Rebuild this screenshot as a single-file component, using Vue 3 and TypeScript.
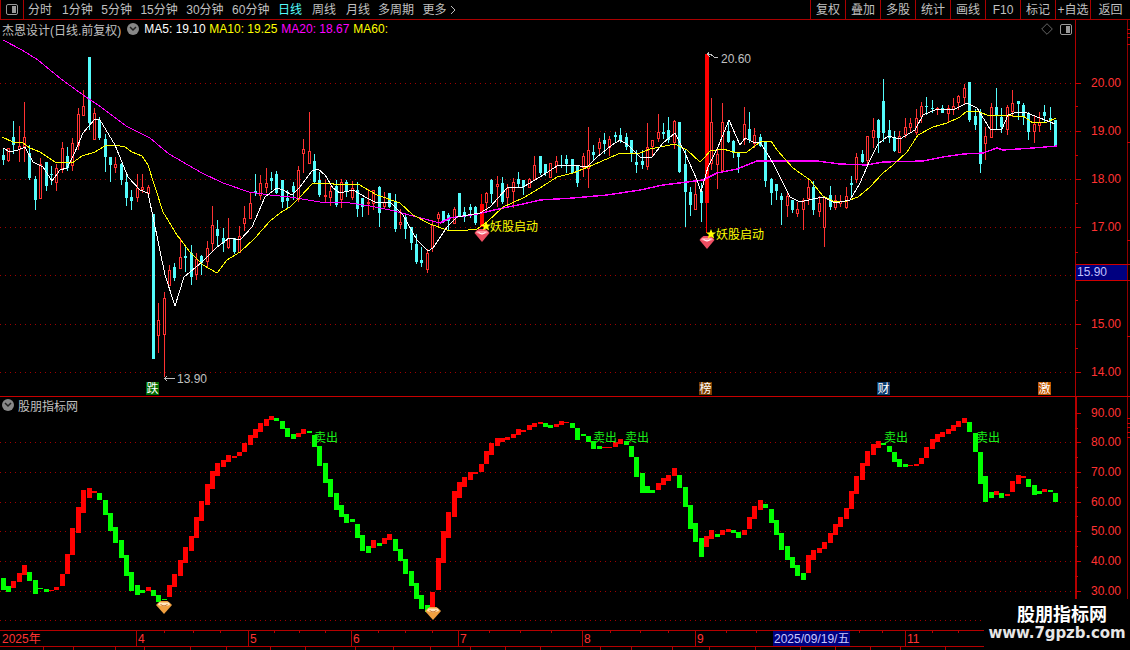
<script setup lang="ts">
const leftTabs = [
  { t: '分时', cls: '' }, { t: '1分钟', cls: 'narrow' }, { t: '5分钟', cls: 'narrow' },
  { t: '15分钟', cls: 'narrow' }, { t: '30分钟', cls: 'narrow' }, { t: '60分钟', cls: 'narrow' },
  { t: '日线', cls: 'on' }, { t: '周线', cls: '' }, { t: '月线', cls: 'tight' },
  { t: '多周期', cls: 'narrow' }, { t: '更多', cls: '' },
]
const rightTabs = ['复权', '叠加', '多股', '统计', '画线', 'F10', '标记', '+自选', '返回']

const candleSrc = `c149,155,160,165 r148,148,160,162 c121,137,145,154 r126,146,149,162 r102,137,146,162 c145,153,178,180 c176,179,200,210 r158,164,198,198 c162,162,186,191 c166,174,175,185
r164,168,182,191 r142,148,168,173 c147,156,168,171 r138,143,165,171 r108,114,145,150 r90,106,115,115 c57,57,123,130 r108,113,139,139 c117,120,138,140 c134,139,157,172
c157,157,165,182 r157,164,167,173 c163,164,180,185 c175,182,198,206 c190,197,201,210 r174,188,197,202 r174,187,189,193 r185,187,193,194 c214,214,359,359 r303,320,335,353
r292,298,334,377 r265,270,285,285 c263,267,278,281 r238,257,268,268 c247,256,258,272 c245,253,277,285 r253,259,274,280 c255,256,263,275 r241,248,261,267 r206,225,243,252
c220,229,236,247 c228,238,243,252 r218,238,247,249 c238,238,252,254 r226,236,252,253 r206,218,223,231 r192,203,218,218 c174,191,193,196 r175,183,195,200 r168,183,187,193
c172,178,181,190 c171,174,193,194 c180,180,202,208 c190,198,201,209 c182,186,192,200 r166,170,199,202 r139,149,153,173 r112,151,163,163 c154,161,182,183 c172,180,195,197
r180,195,196,203 r186,191,197,206 c180,186,205,207 r179,182,199,208 c180,182,191,197 r181,188,197,200 c182,190,209,217 c198,198,207,217 r189,202,203,215 r190,190,203,210
c186,187,213,227 r192,202,206,208 c193,193,207,208 c194,202,229,232 r209,222,224,229 c215,217,229,239 c227,227,243,250 c234,244,262,264 c247,260,263,267 r249,253,269,273
r220,225,247,252 r212,214,218,227 c211,211,221,223 c213,215,221,230 r207,209,223,223 c193,193,217,217 c207,212,217,222 c204,207,210,218 c206,207,223,225 f194,204,227,227
r192,193,202,211 c179,180,194,203 r176,184,186,207 c177,183,202,204 r184,188,197,207 r178,182,191,208 c172,179,184,187 c180,180,187,195 r178,179,187,187 r156,165,179,180
c156,156,173,175 c164,164,173,176 r163,163,177,178 r156,161,165,173 c155,165,166,168 c155,159,164,173 c159,159,173,173 c166,166,183,187 r153,156,167,177 r127,150,168,188
c145,152,155,160 r138,142,148,155 c133,140,144,154 r136,139,147,156 c132,135,137,142 c128,135,140,143 c133,137,147,150 c140,140,153,162 c150,162,165,173 c150,161,165,169
r123,147,166,170 r140,140,146,157 r114,132,138,142 c123,132,134,139 c117,130,140,143 r120,121,142,149 c122,122,172,173 c150,164,192,227 c187,192,205,216 r181,194,209,210
c183,191,203,222 f54,54,203,233 r98,122,163,170 r147,154,164,189 r103,122,170,170 c122,131,142,143 c140,141,153,158 c152,152,157,173 r107,124,139,145 c112,129,140,143
r128,135,143,148 c134,137,146,147 c141,141,181,187 c178,179,193,205 c184,184,191,200 c193,196,200,225 r193,196,205,217 c200,200,210,213 r202,209,213,217 r198,200,209,230
r178,187,198,205 c181,187,210,215 r196,203,211,217 r196,197,227,247 c186,195,207,210 r195,200,207,210 r195,201,203,207 r187,196,207,209 c176,183,185,198 r153,157,179,183
c150,154,162,163 r136,136,160,165 r118,130,137,148 c119,120,138,153 c79,101,133,142 c120,130,138,143 c131,137,151,152 r131,136,152,152 r118,127,134,138 r118,123,127,133
r109,118,132,135 r102,106,116,123 c97,106,107,115 c100,108,109,113 r107,108,109,115 c105,108,113,113 r105,108,113,122 r98,106,109,115 r95,96,102,110 r84,88,97,104
c82,82,120,122 c109,116,125,130 c109,113,164,173 r127,136,143,160 r103,107,137,137 c88,107,116,129 c108,117,127,133 r105,107,129,135 r90,103,111,117 c101,101,104,120
c103,105,117,125 c112,113,132,140 r116,124,131,143 r112,122,125,132 c105,112,116,123 c107,118,120,130 c120,120,147,147`

const barSrc = `g549-585 g573-591 r558-580 r534-561 r510-540 g531-558 g555-597 g579-582 g582-591 r585-588
r576-585 r537-573 r477-537 r400-480 r336-414 r285-354 r279-309 r288-294 g294-315 g315-360
g354-408 g396-444 g435-489 g480-543 g531-588 g570-600 g585-594 r576-588 g585-603 g600-621
g612-615 r570-606 r537-576 r495-543 r456-504 r423-468 r366-429 r318-378 r267-330 r228-282
r204-243 r195-216 r180-201 r183-189 r171-183 r144-171 r120-150 r102-129 r84-111 r72-93
r63-75 g69-78 g78-102 g99-126 g117-132 r114-126 r102-117 g108-114 g120-156 g153-213
g204-264 g252-306 g294-345 g330-366 g357-384 g372-381 g387-429 g420-468 g453-474 r435-459
g444-453 r429-447 r417-435 g432-468 g462-498 g492-537 g528-573 g564-612 g600-642 g630-651
r591-636 r489-585 r408-504 r351-429 r288-366 r261-309 r246-276 r231-255 r231-237 r207-231
r168-207 r144-180 r129-153 r129-141 r126-135 r117-129 r102-120 r105-111 r90-105 r84-96
r81-87 g84-96 g90-99 r87-96 r78-90 r81-84 g84-99 g99-135 g117-123 g123-141
g138-162 g153-162 r156-159 r156-159 r141-156 r132-147 g138-150 g153-186 g186-246 g234-294
g273-294 g285-294 r264-285 r249-270 r240-258 r219-243 g240-279 g276-336 g330-402 g384-441
g429-486 r423-456 r405-432 g417-426 r405-420 r402-411 g405-414 g411-429 r405-420 r366-402
r333-372 r315-345 g327-339 g342-384 g375-420 g414-465 g453-495 g486-519 g510-543 g534-555
r480-534 r465-495 r459-474 r441-462 r414-444 r387-420 r366-396 r339-372 r288-342 r243-297
r204-255 r168-213 r147-180 r138-159 g144-150 g153-171 g171-201 g192-216 g207-216 r210-213
r207-213 r189-207 r156-189 r132-162 r117-141 r111-126 r102-117 r90-108 r78-96 r69-84
g81-111 g114-171 g171-267 g243-321 g291-309 r288-300 g294-309 r297-303 r258-291 r240-267
r243-249 g252-276 g270-300 g288-297 r282-291 g285-291 g294-321`

const center = (i: number) => Math.round(2.6 + 5.37 * i)

const candles = candleSrc.trim().split(/\s+/).map((s, i) => {
  const [hi, top, bot, lo] = s.slice(1).split(',').map(Number)
  return { kind: s[0], x: center(i), hi, top, bot, lo }
})

const bars = barSrc.trim().split(/\s+/).map((s, i) => {
  const [a, b] = s.slice(1).split('-').map(Number)
  const top = 395 + a / 3
  const h = Math.max(1, (b - a) / 3)
  return { x: center(i) - 2, y: top, h, fill: s[0] === 'r' ? '#ff0000' : '#00ff00' }
})

const ma60a = '3,40 22,50 38,60 61,79 86,97 101,107 126,126 150,138 169,154 202,173 223,183 249,192 270,195 290,197 320,202 350,203 370,206 390,210 417,217 440,223'
const ma60b = '440,223 450,218 477,214 503,208 523,204 540,200 573,198 607,195 640,190 663,185 687,182 703,180 717,173 737,169 757,161 797,161 817,161 840,164 867,165 883,162 923,161 943,157 963,154 983,153 997,148 1003,150 1033,148 1057,146'
const ma10 = '2,137 13,142 23,143 30,148 40,152 55,162 72,163 82,156 95,152 105,146 115,145 125,147 132,152 142,156 148,165 155,187 163,212 177,235 190,252 203,265 217,273 227,260 240,252 255,238 270,221 280,213 290,207 300,197 313,183 332,183 335,185 358,184 377,195 400,203 413,215 430,224 447,230 460,231 477,229 487,222 503,207 523,198 540,188 557,177 573,173 593,165 618,154 640,153 650,149 675,144 687,150 700,162 705,157 710,151 723,149 737,153 747,152 760,142 771,141 777,150 793,168 810,180 823,196 833,201 847,201 858,197 870,187 883,173 893,165 907,152 918,135 933,127 947,123 960,117 967,111 977,111 987,115 1013,116 1023,116 1033,123 1047,122 1056,118'
const ma5 = '3,148 10,152 18,150 25,147 33,162 43,167 52,181 60,170 67,168 75,152 83,133 95,119 100,120 115,145 128,177 140,190 148,193 153,217 165,275 175,306 184,277 202,262 216,248 229,238 240,240 252,227 265,197 270,193 277,188 283,190 292,195 300,187 312,171 318,169 325,175 333,188 340,193 353,190 367,198 377,203 390,202 403,215 417,240 428,251 433,248 447,227 457,217 480,213 490,207 507,188 523,187 540,177 557,166 573,165 587,167 597,157 612,145 620,140 628,145 640,157 652,157 663,143 675,133 685,153 697,180 701,192 708,167 718,147 729,120 740,145 745,138 753,142 760,142 773,163 790,197 800,202 813,199 823,197 835,203 850,200 860,183 870,160 878,144 888,136 900,139 915,130 923,115 937,109 955,109 967,103 977,108 990,129 1002,129 1008,115 1017,112 1027,113 1040,118 1055,124'

const priceGrid = [83, 131, 179, 227, 275, 324, 372]
const priceLabels = [
  { t: '20.00', y: 83 }, { t: '19.00', y: 131 }, { t: '18.00', y: 179 },
  { t: '17.00', y: 227 }, { t: '15.00', y: 324 }, { t: '14.00', y: 372 },
]
const priceMinor = [106, 155, 203, 252, 300, 348]
const subGrid = [442, 472, 502, 531, 561, 591, 620]
const subLabels = [
  { t: '90.00', y: 413 }, { t: '80.00', y: 442 }, { t: '70.00', y: 472 }, { t: '60.00', y: 502 },
  { t: '50.00', y: 531 }, { t: '40.00', y: 561 }, { t: '30.00', y: 591 },
]
const subMinor = [428, 457, 487, 516, 546, 576]
const edgePrice = [29, 33, 37, 44, 142, 240, 264, 280, 336]
const edgeSub = [418, 423, 427, 432, 437]

const badges = [
  { t: '跌', x: 146, fill: '#006b00' },
  { t: '榜', x: 699, fill: '#7a3e00' },
  { t: '财', x: 877, fill: '#0a3c6e' },
  { t: '激', x: 1038, fill: '#c05800' },
]

const starts = [
  { gx: 482, gy: 235, sx: 486, sy: 226, tx: 490 },
  { gx: 707, gy: 242, sx: 711, sy: 234, tx: 716 },
]
const sells = [314, 593, 625, 884, 976]
const orange = [{ x: 164, y: 607 }, { x: 433, y: 613 }]

const starPts = '0,-5 1.4,-1.6 5,-1.5 2.2,0.8 3.1,4.5 0,2.4 -3.1,4.5 -2.2,0.8 -5,-1.5 -1.4,-1.6'

const months = [
  { t: '2025年', x: 2, line: false },
  { t: '4', x: 136, line: true },
  { t: '5', x: 248, line: true },
  { t: '6', x: 351, line: true },
  { t: '7', x: 458, line: true },
  { t: '8', x: 582, line: true },
  { t: '9', x: 695, line: true },
  { t: '11', x: 905, line: true },
]
const smallTicks = [164, 193, 220, 274, 299, 325, 378, 405, 432, 489, 520, 551, 610, 640, 668, 726, 756, 859, 882, 932, 958]
const bottomTicks = [43, 73, 115, 144, 190, 226, 270, 305, 355, 393, 430, 470, 505, 540, 600, 631, 672, 709, 755, 800, 835, 870, 900, 945]
</script>

<template>
  <div class="screen">
    <header class="topbar">
      <div class="layout-btn"><span class="toggle"><i></i></span></div>
      <nav class="tabs">
        <span v-for="t in leftTabs" :key="t.t" class="tab" :class="t.cls">
          {{ t.t }}<svg v-if="t.t === '更多'" class="more" width="6" height="10" viewBox="0 0 6 10"><path d="M1 1l4 4-4 4" fill="none" stroke="#c0c0c0" /></svg>
        </span>
      </nav>
      <div class="tools">
        <span v-for="t in rightTabs" :key="t" class="tool">{{ t }}</span>
      </div>
    </header>

    <section class="panel price">
      <div class="plot">
        <div class="legend">
          <span class="stock">杰恩设计(日线.前复权)</span>
          <span class="drop"><svg width="8" height="6" viewBox="0 0 8 6"><path d="M1 1l3 3 3-3" fill="none" stroke="#222" stroke-width="1.5" /></svg></span>
          <span class="ma w1">MA5:&nbsp;19.10</span>
          <span class="ma y w2">MA10:&nbsp;19.25</span>
          <span class="ma m w2">MA20:&nbsp;18.67</span>
          <span class="ma y">MA60:</span>
          <span class="corner">
            <svg width="12" height="12" viewBox="0 0 12 12"><path d="M6 .7L11.3 6 6 11.3.7 6z" fill="none" stroke="#666" /></svg>
            <span class="toggle"><i></i></span>
          </span>
        </div>
        <svg class="chart" width="1075" height="357" viewBox="0 38 1075 357" shape-rendering="crispEdges">
          <line v-for="y in priceGrid" :key="y" x1="0" x2="1075" :y1="y + 0.5" :y2="y + 0.5" class="dots" />
          <g v-for="(c, i) in candles" :key="i">
            <template v-if="c.kind === 'c'">
              <line :x1="c.x + 0.5" :x2="c.x + 0.5" :y1="c.hi" :y2="c.lo" stroke="#54fcfc" />
              <rect :x="c.x - 1" :y="c.top" width="3" :height="Math.max(1, c.bot - c.top)" fill="#54fcfc" />
            </template>
            <template v-else-if="c.kind === 'r'">
              <line :x1="c.x + 0.5" :x2="c.x + 0.5" :y1="c.hi" :y2="c.top" stroke="#ff3232" />
              <line :x1="c.x + 0.5" :x2="c.x + 0.5" :y1="c.bot" :y2="c.lo" stroke="#ff3232" />
              <rect :x="c.x - 0.5" :y="c.top + 0.5" width="2" :height="c.bot - c.top" fill="#000" stroke="#ff3232" />
            </template>
            <template v-else>
              <line :x1="c.x + 0.5" :x2="c.x + 0.5" :y1="c.hi" :y2="c.lo" stroke="#ff0000" />
              <rect :x="c.x - 1" :y="c.top" width="4" :height="c.bot - c.top" fill="#ff0000" />
            </template>
          </g>
          <polyline :points="ma60a" fill="none" stroke="#ff00ff" stroke-width="1" />
          <polyline :points="ma60b" fill="none" stroke="#ff00ff" stroke-width="1.4" />
          <polyline :points="ma10" fill="none" stroke="#ffff00" stroke-width="1" />
          <polyline :points="ma5" fill="none" stroke="#ffffff" stroke-width="1" />

          <g fill="none" stroke="#c0c0c0" stroke-width="1">
            <path d="M707 54.5L709 52.5M707 54.5L710 56.5M707 54.5H711L714 57H718" />
            <path d="M164 378.5H175M164 378.5L167 376.5M164 378.5L167 380.5" />
          </g>
          <text class="note" x="721" y="63">20.60</text>
          <text class="note" x="177" y="383">13.90</text>

          <g v-for="s in starts" :key="s.tx" shape-rendering="auto">
            <g :transform="`translate(${s.gx} ${s.gy})`">
              <polygon points="-6,-4 -3.5,-6 3.5,-6 6,-4 7.5,-2 0,7 -7.5,-2" fill="#ee4e62" />
              <polygon points="-5,-4 5,-4 6,-2 0,-0.5 -6,-2" fill="#ff9aa6" />
              <path d="M-3.5 -3C-2 -.5 2 -.5 3.5 -3" fill="none" stroke="#fff" stroke-width="1" />
            </g>
            <polygon :points="starPts" :transform="`translate(${s.sx} ${s.sy})`" fill="#ffff00" />
            <text class="start" :x="s.tx" :y="s.sy + 5">妖股启动</text>
          </g>

          <g v-for="b in badges" :key="b.t">
            <rect :x="b.x" y="382" width="13" height="13" :fill="b.fill" />
            <text class="badge" :x="b.x + 0.5" y="393">{{ b.t }}</text>
          </g>
        </svg>
      </div>
      <svg class="axis" width="55" height="376" viewBox="1075 20 55 376" shape-rendering="crispEdges">
        <line x1="1075.5" x2="1075.5" y1="20" y2="396" stroke="#b00000" />
        <line x1="1127.5" x2="1127.5" y1="20" y2="396" stroke="#900000" />
        <line v-for="y in priceLabels" :key="y.y" x1="1075" x2="1081" :y1="y.y + 0.5" :y2="y.y + 0.5" stroke="#c80000" />
        <line x1="1075" x2="1081" y1="275.5" y2="275.5" stroke="#c80000" />
        <line v-for="y in priceMinor" :key="y" x1="1075" x2="1078" :y1="y + 0.5" :y2="y + 0.5" stroke="#c80000" />
        <line v-for="y in edgePrice" :key="y" x1="1127" x2="1130" :y1="y + 0.5" :y2="y + 0.5" stroke="#c80000" />
        <text v-for="l in priceLabels" :key="l.t" class="scale" x="1091" :y="l.y + 4">{{ l.t }}</text>
        <rect x="1076" y="265" width="51" height="15" fill="#000080" />
        <line x1="1076" x2="1127" y1="264.5" y2="264.5" stroke="#d00000" />
        <line x1="1076" x2="1127" y1="280.5" y2="280.5" stroke="#d00000" />
        <text class="now" x="1077" y="276">15.90</text>
      </svg>
    </section>

    <section class="panel sub">
      <div class="plot">
        <div class="legend low">
          <span class="drop first"><svg width="8" height="6" viewBox="0 0 8 6"><path d="M1 1l3 3 3-3" fill="none" stroke="#222" stroke-width="1.5" /></svg></span>
          <span class="stock">股朋指标网</span>
        </div>
        <svg class="chart" width="1075" height="216" viewBox="0 414 1075 216" shape-rendering="crispEdges">
          <line v-for="y in subGrid" :key="y" x1="0" x2="1075" :y1="y + 0.5" :y2="y + 0.5" class="dots" />
          <rect v-for="(b, i) in bars" :key="i" :x="b.x" :y="b.y" width="5" :height="b.h" :fill="b.fill" />
          <text v-for="x in sells" :key="x" class="sell" :x="x" y="442">卖出</text>
          <g v-for="g in orange" :key="g.x" :transform="`translate(${g.x} ${g.y})`" shape-rendering="auto">
            <polygon points="-6,-4 -3.5,-6 3.5,-6 6,-4 8,-2 0,7 -8,-2" fill="#f0a040" />
            <polygon points="-5,-4.5 5,-4.5 6,-2 0,-0.5 -6,-2" fill="#ffe6bd" />
            <path d="M-3.5 -3C-2 -.5 2 -.5 3.5 -3" fill="none" stroke="#c9742a" stroke-width="1" />
          </g>
        </svg>
      </div>
      <svg class="axis" width="55" height="233" viewBox="1075 397 55 233" shape-rendering="crispEdges">
        <line x1="1076" x2="1076" y1="397" y2="599" stroke="#b40000" stroke-width="2" />
        <line x1="1127.5" x2="1127.5" y1="397" y2="599" stroke="#900000" />
        <line v-for="l in subLabels" :key="l.t" x1="1075" x2="1081" :y1="l.y + 0.5" :y2="l.y + 0.5" stroke="#c80000" />
        <line v-for="y in subMinor" :key="y" x1="1075" x2="1078" :y1="y + 0.5" :y2="y + 0.5" stroke="#c80000" />
        <line v-for="y in edgeSub" :key="y" x1="1127" x2="1130" :y1="y + 0.5" :y2="y + 0.5" stroke="#c80000" />
        <text v-for="l in subLabels" :key="l.t" class="scale" x="1091" :y="l.y + 4">{{ l.t }}</text>
      </svg>
    </section>

    <footer class="dates">
      <svg width="1130" height="20" viewBox="0 630 1130 20" shape-rendering="crispEdges">
        <line x1="0" x2="1130" y1="630.5" y2="630.5" stroke="#b40000" />
        <line x1="0" x2="1130" y1="646.5" y2="646.5" stroke="#b40000" />
        <line v-for="x in smallTicks" :key="x" :x1="x + 0.5" :x2="x + 0.5" y1="630" y2="633" stroke="#b40000" />
        <line v-for="x in bottomTicks" :key="x" :x1="x + 0.5" :x2="x + 0.5" y1="647" y2="650" stroke="#b40000" />
        <g v-for="m in months" :key="m.t">
          <line v-if="m.line" :x1="m.x + 0.5" :x2="m.x + 0.5" y1="630" y2="646" stroke="#b40000" />
          <text class="month" :x="m.line ? m.x + 2 : m.x" y="643">{{ m.t }}</text>
        </g>
        <rect x="773" y="631" width="77" height="15" fill="#000080" />
        <text class="date" x="774" y="643">2025/09/19/五</text>
      </svg>
    </footer>

    <aside class="mark">
      <div class="mark-cn">股朋指标网</div>
      <div class="mark-en">www.7gpzb.com</div>
    </aside>
  </div>
</template>

<style scoped>
.screen {
  position: relative;
  width: 1130px;
  height: 650px;
  overflow: hidden;
  background: #000;
  font-family: "Liberation Sans", "Noto Sans CJK SC", sans-serif;
  font-size: 12px;
  color: #c0c0c0;
}
.topbar {
  display: flex;
  height: 20px;
  box-sizing: border-box;
  border-bottom: 1px solid #aa0000;
}
.layout-btn {
  display: flex;
  align-items: center;
  justify-content: center;
  width: 24px;
  box-sizing: border-box;
  border-left: 1px solid #aa0000;
  border-right: 1px solid #aa0000;
}
.toggle {
  display: block;
  box-sizing: border-box;
  width: 12px;
  height: 11px;
  border: 1px solid #999;
  border-radius: 2px;
  padding: 1px;
}
.toggle i {
  display: block;
  width: 4px;
  height: 100%;
  margin-left: auto;
  background: #999;
}
.tabs {
  display: flex;
  align-items: center;
  gap: 10px;
  padding-left: 4px;
}
.tab {
  display: flex;
  align-items: center;
  gap: 2px;
  white-space: nowrap;
  line-height: 20px;
}
.tab.on {
  color: #54fcfc;
}
.tab.narrow {
  margin-right: -1.5px;
}
.tab.tight {
  margin-right: -2px;
}
.more {
  margin-left: 1px;
}
.tools {
  display: flex;
  margin-left: auto;
}
.tool {
  width: 35px;
  box-sizing: border-box;
  border-left: 1px solid #aa0000;
  text-align: center;
  line-height: 20px;
  white-space: nowrap;
}
.tool:last-child {
  width: 40px;
}
.panel {
  display: grid;
  grid-template-columns: 1075px 55px;
}
.price {
  height: 376px;
  border-bottom: 1px solid #c80000;
}
.sub {
  height: 233px;
}
.plot {
  display: flex;
  flex-direction: column;
}
.legend {
  display: flex;
  align-items: center;
  height: 18px;
  padding-left: 2px;
  white-space: nowrap;
}
.legend.low {
  height: 16px;
  padding-bottom: 1px;
}
.drop {
  display: flex;
  align-items: center;
  justify-content: center;
  width: 12px;
  height: 12px;
  border-radius: 50%;
  background: #888;
  margin: 0 5px 0 6px;
}
.drop.first {
  margin: 0 4px 0 0;
}
.ma {
  color: #fff;
}
.ma.y {
  color: #ffff00;
}
.ma.m {
  color: #ff00ff;
}
.w1 {
  width: 65px;
}
.w2 {
  width: 72px;
}
.corner {
  display: flex;
  align-items: center;
  gap: 7px;
  margin-left: auto;
  margin-right: 3px;
}
.chart,
.axis,
.dates svg {
  display: block;
}
.dots {
  stroke: #a00000;
  stroke-dasharray: 1 4;
}
.note {
  font-size: 12px;
  fill: #c0c0c0;
}
.start {
  font-size: 12px;
  fill: #ffff00;
}
.badge {
  font-size: 12px;
  fill: #fff;
}
.sell {
  font-size: 12px;
  fill: #19ee19;
}
.scale {
  font-size: 12px;
  fill: #ff3232;
}
.now {
  font-size: 12px;
  fill: #c0c0ff;
}
.month {
  font-size: 12px;
  fill: #ff3232;
}
.date {
  font-size: 12px;
  fill: #c8c8ff;
}
.mark {
  position: absolute;
  right: 0;
  bottom: 0;
  width: 146px;
  height: 50px;
  background: #000;
  display: flex;
  flex-direction: column;
  align-items: center;
}
.mark-cn {
  margin-top: 4px;
  padding-left: 10px;
  font-size: 18px;
  line-height: 22px;
  font-weight: 700;
  color: #fff;
}
.mark-en {
  font-family: "DejaVu Sans", sans-serif;
  font-size: 15px;
  line-height: 14px;
  font-weight: 700;
  letter-spacing: -0.1px;
  color: #e6e6e6;
}
</style>

<style>
html,
body {
  background: #000;
}
</style>
